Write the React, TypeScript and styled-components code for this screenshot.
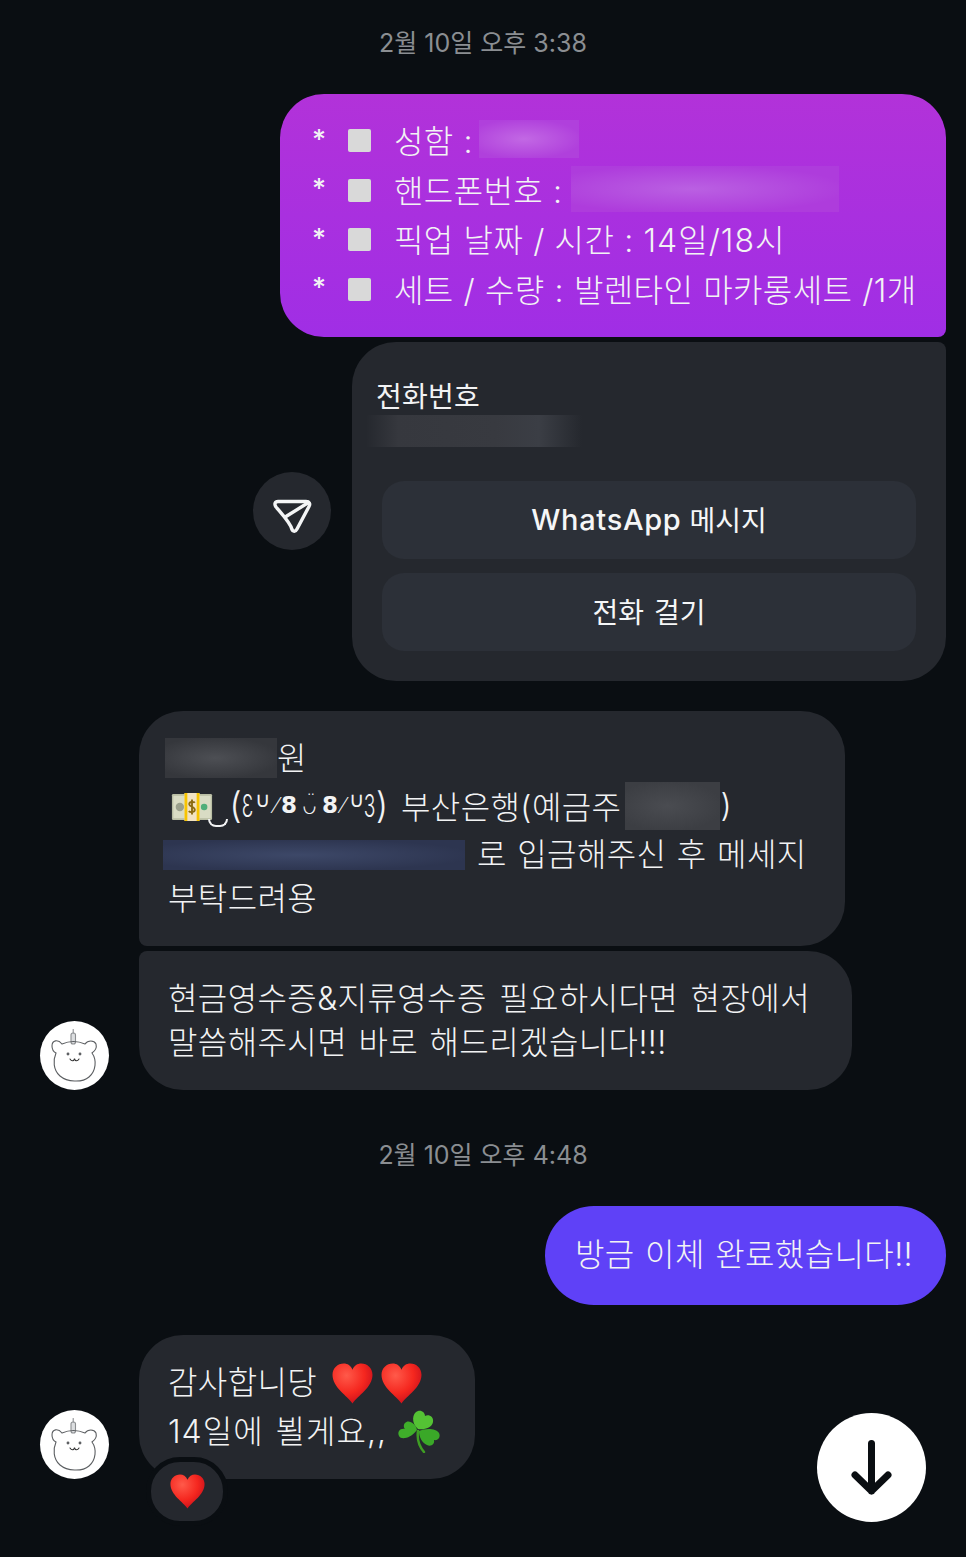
import React from "react";
import styled, { createGlobalStyle } from "styled-components";

const Global = createGlobalStyle`
  html, body { margin: 0; padding: 0; background: #0a0e12; }
  * { box-sizing: border-box; }
`;

const Page = styled.div`
  position: relative;
  width: 966px;
  height: 1557px;
  overflow: hidden;
  background: #0a0e12;
  color: #f2f3f4;
  font-family: Inter, "Noto Sans CJK KR", sans-serif;
  font-size: 32px;
  font-weight: 300;
  letter-spacing: 0.4px;
  word-spacing: 2px;
  display: flex;
  flex-direction: column;
`;

const Stamp = styled.div<{ $top: number }>`
  height: 40px;
  margin: ${p => p.$top}px 0 32px;
  padding-top: 1px;
  text-align: center;
  line-height: 40px;
  font-size: 25px;
  font-weight: 400;
  letter-spacing: 0;
  word-spacing: 0;
  color: #8b8e92;
`;

const OutRow = styled.div<{ $top?: number }>`
  display: flex;
  justify-content: flex-end;
  align-items: center;
  gap: 21px;
  padding-right: 20px;
  margin-top: ${p => p.$top ?? 0}px;
`;

const InRow = styled.div<{ $top?: number }>`
  display: flex;
  align-items: flex-end;
  gap: 30px;
  padding-left: 40px;
  margin-top: ${p => p.$top ?? 0}px;
`;

const PurpleBubble = styled.div`
  width: 666px;
  height: 243px;
  padding: 22px 0 0 32px;
  border-radius: 44px 44px 8px 44px;
  background: linear-gradient(180deg, #b232d9 0%, #a02ee5 100%);
  word-spacing: 0.5px;
`;

const FormRow = styled.div`
  display: flex;
  align-items: center;
  height: 49.500px;
  white-space: nowrap;
`;

const Star = styled.span`
  width: 36px;
  font-size: 27px;
  font-weight: 500;
  line-height: 1;
  margin-top: -3px;
`;

const Square = styled.span`
  width: 23px;
  height: 23px;
  margin-right: 23px;
  border-radius: 2px;
  background: #d9d9d9;
`;

const FormText = styled.span`
  display: flex;
  align-items: center;
  white-space: pre;
  padding-bottom: 3px;
`;

const Num = styled.span`
  letter-spacing: 1px;
`;

const Redact = styled.span<{ $w: number; $h: number; $bg: string; $glow: string; $ml?: number; $shift?: number }>`
  flex: none;
  width: ${p => p.$w}px;
  height: ${p => p.$h}px;
  margin: ${p => -p.$h + 2 * (p.$shift ?? 0)}px 0 ${p => -p.$h}px ${p => p.$ml ?? 0}px;
  background:
    radial-gradient(ellipse at 45% 50%, ${p => p.$glow} 0%, transparent 75%),
    ${p => p.$bg};
`;

const Card = styled.div`
  width: 594px;
  height: 339px;
  padding: 30px 30px 0;
  border-radius: 44px 8px 44px 44px;
  background: #25282e;
`;

const CardTitle = styled.div`
  height: 46px;
  margin: 2px 0 0 -6px;
  line-height: 46px;
  font-size: 28px;
  font-weight: 400;
  letter-spacing: 0.2px;
`;

const CardRedact = styled.div`
  width: 216px;
  height: 32px;
  margin: -5px 0 34px -16px;
  background: linear-gradient(90deg, #25282e 0%, #36383e 15%, #383a40 60%, #3b3e45 80%, #25282e 100%);
`;

const CardButton = styled.div`
  height: 78px;
  margin-bottom: 14px;
  padding-bottom: 2px;
  border-radius: 22px;
  background: #2c3038;
  display: flex;
  align-items: center;
  justify-content: center;
  font-size: 28px;
  font-weight: 400;
  letter-spacing: 0;
  color: #f5f6f7;
`;

const ButtonLatin = styled.span`
  margin-right: 8px;
  font-weight: 500;
  font-size: 29px;
  letter-spacing: 0.7px;
`;

const Circle = styled.div`
  width: 78px;
  height: 78px;
  margin-bottom: 2px;
  border-radius: 50%;
  background: #25282e;
  display: flex;
  align-items: center;
  justify-content: center;
`;

const Bubble = styled.div<{ $w: number; $h: number; $r: string; $pt?: number }>`
  position: relative;
  width: ${p => p.$w}px;
  height: ${p => p.$h}px;
  padding: ${p => p.$pt ?? 22}px 0 0 29px;
  border-radius: ${p => p.$r};
  background: #25282e;
`;

const TextLine = styled.div<{ $h: number; $ml?: number; $ws?: number }>`
  display: flex;
  align-items: center;
  height: ${p => p.$h}px;
  margin-left: ${p => p.$ml ?? 0}px;
  word-spacing: ${p => p.$ws ?? 2}px;
  white-space: nowrap;
`;

const Kao = styled.span`
  display: flex;
  flex: none;
  align-items: center;
  margin: 0 12px 0 1px;
  font-family: "DejaVu Sans", sans-serif;
  letter-spacing: 0;
`;

const KaoGlyph = styled.span<{ $w: number; $size: number; $bold?: boolean; $up?: number }>`
  width: ${p => p.$w}px;
  margin-top: ${p => -2 * (p.$up ?? 0)}px;
  text-align: center;
  font-size: ${p => p.$size}px;
  font-weight: ${p => (p.$bold ? 700 : 300)};
`;

const KaoParen = styled.span<{ $w: number }>`
  width: ${p => p.$w}px;
  text-align: center;
  font-family: Inter, sans-serif;
  font-size: 36px;
  font-weight: 300;
`;

const KaoNarrow = styled.span`
  width: 11px;
  display: flex;
  justify-content: center;
  font-family: Inter, sans-serif;
  font-size: 31px;
  font-weight: 300;
  transform: scaleX(0.62);
`;

const Smile = styled.span`
  flex: none;
  width: 20px;
  height: 8px;
  margin: 36px 0 0 -5px;
  border: 2px solid #f2f3f4;
  border-top: 0;
  border-radius: 0 0 12px 12px;
`;

const BlueBubble = styled.div`
  width: 401px;
  height: 99px;
  padding: 0 0 8px 30px;
  display: flex;
  align-items: center;
  border-radius: 49px;
  background: #5f41f7;
  white-space: nowrap;
  word-spacing: 1px;
`;

const AvatarWrap = styled.div`
  flex: none;
  width: 69px;
  height: 69px;
  border-radius: 50%;
  background: #fff;
  display: flex;
  align-items: center;
  justify-content: center;
`;

const Reaction = styled.div`
  position: absolute;
  left: 7px;
  top: 122px;
  width: 82px;
  height: 69px;
  border: 5px solid #0a0e12;
  border-radius: 34px;
  background: #25282e;
  display: flex;
  align-items: center;
  justify-content: center;
`;

const ScrollDown = styled.div`
  position: absolute;
  left: 817px;
  top: 1413px;
  width: 109px;
  height: 109px;
  border-radius: 50%;
  background: #fff;
  display: flex;
  align-items: center;
  justify-content: center;
`;

const EmojiGap = styled.span<{ $w: number }>`
  display: inline-block;
  flex: none;
  width: ${p => p.$w}px;
`;

const EmojiSlot = styled.span<{ $mt: number }>`
  display: flex;
  flex: none;
  margin-top: ${p => p.$mt}px;
`;

const Heart = ({ size }: { size: number }) => (
  <svg width={size} height={size} viewBox="0 0 40 40">
    <defs>
      <radialGradient id="hg" cx="35%" cy="30%" r="75%">
        <stop offset="0" stopColor="#ff5a4a" />
        <stop offset="0.6" stopColor="#f5271f" />
        <stop offset="1" stopColor="#c8101c" />
      </radialGradient>
    </defs>
    <path d="M20 39.500C15 32 0.500 24 0.500 11.500 0.500 5 5.500 0.500 11.500 0.500 15 0.500 18.500 2.500 20 6.500 21.500 2.500 25 0.500 28.500 0.500 34.500 0.500 39.500 5 39.500 11.500 39.500 24 25 32 20 39.500Z" fill="url(#hg)" />
  </svg>
);

const Clover = () => (
  <svg width="44" height="43" viewBox="0 0 44 43">
    <path d="M21 21C20 28 22 36 27 42" stroke="#3f9e24" strokeWidth="2.500" fill="none" strokeLinecap="round" />
    <path d="M20 20C19 13 11 9 8 13 6 15 7 18 8 19 3 18 0 22 2 26 4 30 13 29 20 20Z" fill="#3fae2a" />
    <path d="M21 19C14 13 15 3 21 1 25 0 28 3 28 6 32 4 37 7 36 12 35 18 27 20 21 19Z" fill="#54c234" />
    <path d="M22 21C28 18 39 18 42 23 44 27 41 31 37 30 38 34 34 37 30 35 25 33 22 27 22 21Z" fill="#3aa828" />
  </svg>
);

const Money = () => (
  <svg width="42" height="28" viewBox="0 0 44 30">
    <rect x="0.500" y="1" width="43" height="28" rx="1.500" fill="#b9bea4" />
    <rect x="2" y="3" width="40" height="24" fill="#d9dcc4" />
    <circle cx="9" cy="15" r="4.500" fill="#9aa08c" />
    <circle cx="35" cy="15" r="3.500" fill="#4fae7a" />
    <rect x="14" y="0" width="16" height="30" fill="#f2e3c2" />
    <rect x="14" y="0" width="3" height="30" fill="#f7c400" />
    <rect x="27" y="0" width="3" height="30" fill="#f7c400" />
    <path d="M25 10.500C24 9 19 9 19 12 19 15 25 14.500 25 18 25 21 20 21 18.500 19.500M22 7V23" stroke="#8a6a10" strokeWidth="2" fill="none" />
  </svg>
);

const Bear = () => (
  <svg width="60" height="60" viewBox="0 0 60 60" fill="none" stroke="#5c5f62" strokeWidth="1.100" strokeLinecap="round">
    <rect x="26" y="7" width="4.500" height="11" rx="2" fill="#dcdee0" stroke="#8a8d90" />
    <path d="M28.200 3.500V7" stroke="#8a8d90" />
    <path d="M17 18C13 13 7 14 7 20 7 24 9 26 11 27 8 34 8 44 15 50 22 56 37 57 44 51 51 45 52 34 47 27 50 25 52 22 51 18 49 14 43 14 40 18 33 15 24 15 17 18Z" />
    <circle cx="23" cy="28" r="0.900" fill="#333" />
    <circle cx="35" cy="28" r="0.900" fill="#333" />
    <path d="M25 33C26.500 35.500 29 35.500 29.500 32.500 30 35.500 32.500 35.500 34 33" stroke="#333" />
  </svg>
);

const PlaneIcon = () => (
  <svg width="40" height="36" viewBox="0 0 40 36" style={{ marginTop: 10 }} fill="none" stroke="#f4f5f6" strokeWidth="3.400" strokeLinejoin="round" strokeLinecap="round">
    <path d="M6 3.500H34C37.500 3.500 38.500 6 37 8.500L25 31C23.500 34 21 34 20 31.500 18.500 25 9 15 4 9 2 6 3 3.500 6 3.500Z" />
    <path d="M36.500 4.500L14 18.500" />
  </svg>
);

const DownIcon = () => (
  <svg width="41" height="55" viewBox="0 0 41 55" fill="none" stroke="#0a0e12" strokeWidth="7" strokeLinecap="round" strokeLinejoin="round">
    <path d="M20.500 3.500V51M4 35L20.500 51L37 35" />
  </svg>
);

const rows = [
  <FormText>성함 :<Redact $w={100} $h={38} $bg="#b040dc" $glow="#c268e4" $ml={6} /></FormText>,
  <FormText>핸드폰번호 :<Redact $w={268} $h={46} $bg="#ae3cdc" $glow="#ba60e2" $ml={8} /></FormText>,
  <FormText>픽업 날짜 / 시간 : <Num>14일/18시</Num></FormText>,
  <FormText>세트 / 수량 : 발렌타인 마카롱세트 /1개</FormText>,
];

export default function App() {
  return (
    <Page>
      <Global />
      <Stamp $top={22}>2월 10일 오후 3:38</Stamp>
      <OutRow>
        <PurpleBubble>
          {rows.map((r, i) => (
            <FormRow key={i}>
              <Star>*</Star>
              <Square />
              {r}
            </FormRow>
          ))}
        </PurpleBubble>
      </OutRow>
      <OutRow $top={5}>
        <Circle><PlaneIcon /></Circle>
        <Card>
          <CardTitle>전화번호</CardTitle>
          <CardRedact />
          <CardButton><ButtonLatin>WhatsApp</ButtonLatin>메시지</CardButton>
          <CardButton>전화 걸기</CardButton>
        </Card>
      </OutRow>
      <InRow $top={30}>
        <EmojiGap $w={69} />
        <Bubble $w={706} $h={235} $r="44px 44px 44px 8px" $pt={23}>
          <TextLine $h={44} $ml={-3}><Redact $w={112} $h={40} $bg="#35373c" $glow="#4d4f54" $shift={2} />원</TextLine>
          <TextLine $h={54} $ml={3}>
            <EmojiSlot $mt={4}><Money /></EmojiSlot>
            <Smile />
            <Kao>
              <KaoParen $w={13}>(</KaoParen>
              <KaoNarrow>Ɛ</KaoNarrow>
              <KaoGlyph $w={18} $size={21} $up={5}>∪</KaoGlyph>
              <KaoGlyph $w={10} $size={22}>⁄</KaoGlyph>
              <KaoGlyph $w={16} $size={23} $bold>8</KaoGlyph>
              <KaoGlyph $w={25} $size={26}>ᴗ̈</KaoGlyph>
              <KaoGlyph $w={16} $size={23} $bold>8</KaoGlyph>
              <KaoGlyph $w={10} $size={22}>⁄</KaoGlyph>
              <KaoGlyph $w={16} $size={21} $up={5}>∪</KaoGlyph>
              <KaoNarrow>3</KaoNarrow>
              <KaoParen $w={14}>)</KaoParen>
            </Kao>
            부산은행(예금주<Redact $w={95} $h={48} $bg="#3c3e43" $glow="#4a4c51" $ml={4} $shift={1} />)
          </TextLine>
          <TextLine $h={40} $ml={-5} $ws={1}>
            <Redact $w={302} $h={30} $bg="#2d3550" $glow="#3d4868" $shift={3} />
            <EmojiGap $w={12} />로 입금해주신 후 메세지
          </TextLine>
          <TextLine $h={48}>부탁드려용</TextLine>
        </Bubble>
      </InRow>
      <InRow $top={5}>
        <AvatarWrap><Bear /></AvatarWrap>
        <Bubble $w={713} $h={139} $r="8px 44px 44px 44px" $pt={23}>
          <TextLine $h={44} $ws={3}>현금영수증&amp;지류영수증 필요하시다면 현장에서</TextLine>
          <TextLine $h={44} $ws={2}>말씀해주시면 바로 해드리겠습니다!!!</TextLine>
        </Bubble>
      </InRow>
      <Stamp $top={44}>2월 10일 오후 4:48</Stamp>
      <OutRow>
        <BlueBubble>방금 이체 완료했습니다!!</BlueBubble>
      </OutRow>
      <InRow $top={30}>
        <AvatarWrap><Bear /></AvatarWrap>
        <Bubble $w={336} $h={144} $r="44px 44px 44px 44px" $pt={20}>
          <TextLine $h={50}>감사합니당<EmojiGap $w={15} /><EmojiSlot $mt={6}><Heart size={41} /></EmojiSlot><EmojiGap $w={8} /><EmojiSlot $mt={6}><Heart size={41} /></EmojiSlot></TextLine>
          <TextLine $h={48}><Num>14일에 뵐게요,,</Num><EmojiGap $w={10} /><EmojiSlot $mt={4}><Clover /></EmojiSlot></TextLine>
          <Reaction><Heart size={35} /></Reaction>
        </Bubble>
      </InRow>
      <ScrollDown><DownIcon /></ScrollDown>
    </Page>
  );
}
